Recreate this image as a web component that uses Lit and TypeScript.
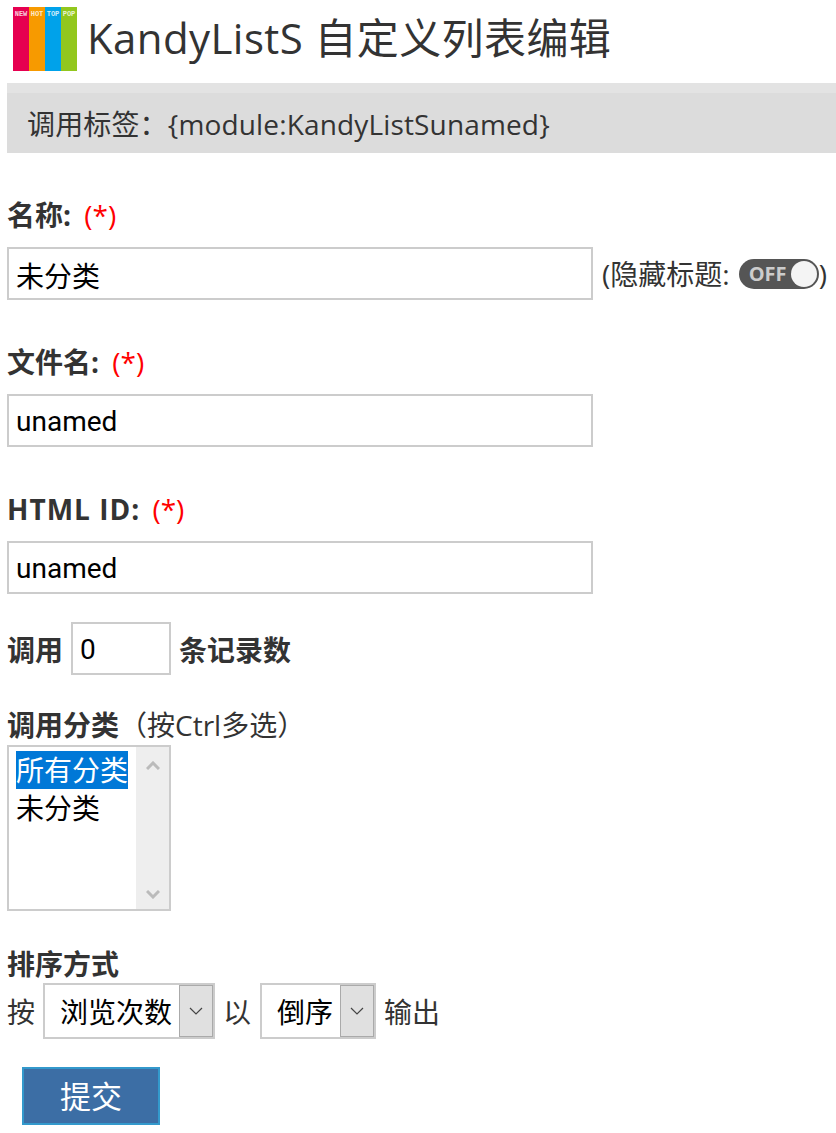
import { LitElement, html, css } from 'lit';
import { customElement } from 'lit/decorators.js';

const STRIPES = [
  { label: 'NEW', color: '#e60050' },
  { label: 'HOT', color: '#f79a00' },
  { label: 'TOP', color: '#00a2ea' },
  { label: 'POP', color: '#92c71e' },
];

@customElement('app-root')
export class AppRoot extends LitElement {
  static styles = css`
    :host {
      display: block;
      width: 836px;
      height: 1133px;
      overflow: hidden;
      background: #fff;
      color: #333;
      font-family: 'Open Sans', 'Noto Sans CJK SC', sans-serif;
      font-size: 28px;
      line-height: 36px;
    }
    .head {
      display: flex;
      align-items: flex-start;
      gap: 10px;
      padding: 7px 0 0 13px;
      height: 76px;
      box-sizing: border-box;
    }
    .logo { display: flex; width: 64px; height: 64px; flex: none; }
    .stripe {
      width: 16px;
      height: 64px;
      padding-top: 3px;
      box-sizing: border-box;
      color: rgba(255, 255, 255, 0.8);
      font: bold 7px/8px 'Liberation Mono', monospace;
      text-align: center;
    }
    h1 {
      margin: -1px 0 0;
      font-size: 42px;
      font-weight: 400;
      line-height: 64px;
      letter-spacing: 0.4px;
    }
    .tag {
      margin: 7px 0 0 7px;
      height: 70px;
      box-sizing: border-box;
      padding: 22px 0 0 20px;
      background: linear-gradient(#e3e3e3 10px, #dcdcdc 10px);
      line-height: 38px;
      letter-spacing: 0.15px;
    }
    .field { padding-left: 7px; }
    .label { font-weight: 700; display: block; }
    .label.latin { letter-spacing: 1px; }
    .req { color: #f00; font-weight: 400; margin-left: 6px; letter-spacing: 0; }
    .label.latin .req { margin-left: 4px; }
    input {
      box-sizing: border-box;
      border: 2px solid #ccc;
      background: #fff;
      color: #000;
      font: inherit;
      font-family: Roboto, 'Noto Sans CJK SC', sans-serif;
      padding: 2px 7px 0;
      outline: none;
    }
    .wide { width: 586px; height: 53px; display: block; }
    .row { display: flex; align-items: center; }
    .block { margin-top: 44px; }
    .block .label { margin-bottom: 14px; }
    .hide-title { display: flex; align-items: center; margin-left: 9px; white-space: nowrap; }
    .toggle {
      position: relative;
      width: 80px;
      height: 30px;
      margin-left: 9px;
      border-radius: 15px;
      background: #555;
      color: #ccc;
      font-size: 20px;
      font-weight: 700;
      line-height: 30px;
      padding-left: 10px;
      box-sizing: border-box;
    }
    .knob {
      position: absolute;
      right: 2px;
      top: 2px;
      width: 26px;
      height: 26px;
      border-radius: 50%;
      background: #f4f4f4;
    }
    .count { margin-top: 28px; gap: 8px; font-weight: 700; }
    .count span { padding-top: 2px; }
    .count input { width: 100px; height: 53px; font-weight: 400; }
    .cats { margin-top: 32px; }
    .cats .hint { font-weight: 400; }
    .listbox {
      display: flex;
      width: 164px;
      height: 166px;
      box-sizing: border-box;
      border: 2px solid #ccc;
      color: #000;
      margin-top: 2px;
    }
    .options { flex: 1; padding: 4px 0 0 7px; line-height: 38px; }
    .option { width: max-content; }
    .option.selected { background: #0078d7; color: #fff; }
    .scrollbar {
      width: 33px;
      background: #eee;
      display: flex;
      flex-direction: column;
      justify-content: space-between;
      align-items: center;
      padding: 14px 0 10px;
      box-sizing: border-box;
    }
    .order { margin-top: 35px; }
    .order .row { gap: 8px; margin-top: 1px; }
    .order .row > span { padding-top: 2px; }
    .select {
      position: relative;
      display: block;
      height: 56px;
      box-sizing: border-box;
      border: 2px solid #ccc;
      background: #fff;
    }
    select {
      appearance: none;
      -webkit-appearance: none;
      display: block;
      box-sizing: border-box;
      height: 52px;
      width: 100%;
      border: 0;
      background: transparent;
      color: #000;
      font: inherit;
      padding: 2px 0 0 15px;
      outline: none;
    }
    .select .arrow {
      position: absolute;
      top: 0;
      right: 0;
      bottom: 0;
      width: 34px;
      background: #e0e0e0;
      border: 1px solid #aaa;
      box-sizing: border-box;
      display: flex;
      align-items: center;
      justify-content: center;
    }
    .s1 { width: 172px; }
    .s2 { width: 116px; margin-left: 1px; }
    button {
      display: block;
      width: 138px;
      height: 58px;
      margin: 28px 0 0 22px;
      border: 2px solid #3399cc;
      background: #3c6ea5;
      color: #fff;
      font: inherit;
      font-size: 31px;
      padding: 0;
    }
  `;

  private chevron(up = false) {
    return html`<svg width="14" height="9" viewBox="0 0 14 9" fill="none" stroke="#bbb" stroke-width="3">
      <path d=${up ? 'M1 8L7 2L13 8' : 'M1 1L7 7L13 1'}></path>
    </svg>`;
  }

  private selectBox(cls: string, text: string) {
    return html`<label class="select ${cls}">
      <select><option>${text}</option></select>
      <span class="arrow">
        <svg width="14" height="8" viewBox="0 0 14 8" fill="none" stroke="#444" stroke-width="1.2">
          <path d="M1 1L7 7L13 1"></path>
        </svg>
      </span>
    </label>`;
  }

  render() {
    return html`
      <div class="head">
        <div class="logo">
          ${STRIPES.map(
            (s) => html`<div class="stripe" style="background:${s.color}">${s.label}</div>`
          )}
        </div>
        <h1>KandyListS 自定义列表编辑</h1>
      </div>
      <div class="tag">调用标签：{module:KandyListSunamed}</div>

      <div class="field block">
        <span class="label">名称: <span class="req">(*)</span></span>
        <div class="row">
          <input class="wide" .value=${'未分类'} />
          <span class="hide-title">(隐藏标题:
            <span class="toggle">OFF<span class="knob"></span></span>)</span>
        </div>
      </div>

      <div class="field block">
        <span class="label">文件名: <span class="req">(*)</span></span>
        <input class="wide" .value=${'unamed'} />
      </div>

      <div class="field block">
        <span class="label latin">HTML ID: <span class="req">(*)</span></span>
        <input class="wide" .value=${'unamed'} />
      </div>

      <div class="field row count">
        <span>调用</span>
        <input .value=${'0'} />
        <span>条记录数</span>
      </div>

      <div class="field cats">
        <span class="label">调用分类<span class="hint">（按Ctrl多选）</span></span>
        <div class="listbox">
          <div class="options">
            <div class="option selected">所有分类</div>
            <div class="option">未分类</div>
          </div>
          <div class="scrollbar">${this.chevron(true)}${this.chevron()}</div>
        </div>
      </div>

      <div class="field order">
        <span class="label">排序方式</span>
        <div class="row">
          <span>按</span>
          ${this.selectBox('s1', '浏览次数')}
          <span>以</span>
          ${this.selectBox('s2', '倒序')}
          <span>输出</span>
        </div>
      </div>

      <button>提交</button>
    `;
  }
}
